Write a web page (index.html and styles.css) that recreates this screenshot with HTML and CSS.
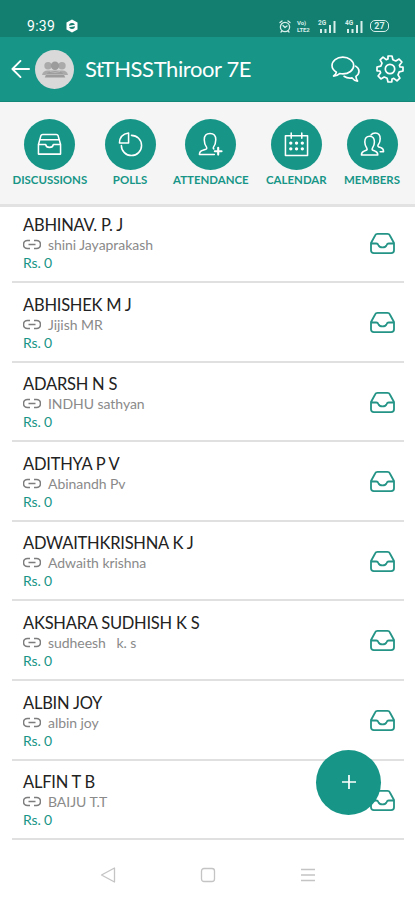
FILE: index.html
```html
<!DOCTYPE html>
<html lang="en">
<head>
<meta charset="utf-8">
<meta name="viewport" content="width=device-width, initial-scale=1">
<title>StTHSSThiroor 7E</title>
<link rel="stylesheet" href="styles.css">
</head>
<body>
<svg class="defs" aria-hidden="true">
  <symbol id="tray" viewBox="0 0 28 24"><path d="M2 11.5 6.3 3.6Q7 2 8.8 2h10.4q1.800 0 2.500 1.600L26 11.500V19q0 3-3 3H5q-3 0-3-3zM2 12h5.500q1.600 0 2.200 1.600 1 2.400 4.300 2.400t4.300-2.400Q18.900 12 20.500 12H26"/></symbol>
  <symbol id="link" viewBox="0 0 18 11"><path d="M7 1.500H4.500a4 4 0 0 0 0 8H7M11 1.500h2.500a4 4 0 0 1 0 8H11M5.500 5.500h7"/></symbol>
</svg>
<div class="status">
  <span class="clock">9:39</span>
  <svg class="hex" viewBox="0 0 14 14"><path fill="#fff" d="M7 .5l5.500 3v7L7 13.500l-5.500-3v-7z"/><circle cx="7" cy="7" r="3" fill="#137c6c"/><path stroke="#fff" stroke-width="1.300" d="M4 7.500l6-1"/></svg>
  <div class="indicators">
    <svg class="alarm line" viewBox="0 0 12 13"><circle cx="6" cy="7" r="4.600"/><path d="M1 2.500 3 1M11 2.500 9 1M4 5.500l2 2 2-1.500M3 11l-1 1M9 11l1 1"/></svg>
    <div class="volte"><span>Vo)</span><span>LTE2</span></div>
    <div class="signal"><span>2G</span><svg viewBox="0 0 18 13"><path d="M3 9v4M7.500 9v4M12 5v8M16.500 1v12"/></svg></div>
    <div class="signal"><span>4G</span><svg viewBox="0 0 18 13"><path d="M3 9v4M7.500 9v4M12 5v8M16.500 1v12"/></svg></div>
    <span class="battery">27</span>
  </div>
</div>
<header class="bar">
  <svg class="back line" viewBox="0 0 20 20"><path d="M19 10H2M10 1.500 1.500 10l8.500 8.500"/></svg>
  <div class="avatar"><svg viewBox="0 0 28 18"><g fill="#aaa"><circle cx="6.500" cy="5" r="4"/><circle cx="21.500" cy="5" r="4"/><path d="M0 15q1-5 6-5h16q5 0 6 5z"/></g><g fill="#9c9c9c"><circle cx="14" cy="5" r="4.500"/><path d="M3 17.500q2-6.500 8-6.500h6q6 0 8 6.500z"/></g><path d="M4 14.300h20M8.500 11.200q5.500 2 11 0" stroke="#c4c4c4" fill="none" stroke-width=".8"/></svg></div>
  <h1>StTHSSThiroor 7E</h1>
  <svg class="chat line" viewBox="0 0 30 28"><path d="M5.600 16.800C2.600 15 1 12.500 1 9.900 1 5 6 1.200 12.200 1.200s11.300 3.800 11.300 8.700-5.100 8.700-11.300 8.700q-1.700 0-3.300-.4Q6 20.800 2.600 20.800q2.600-1.500 3-4zM25.500 10.500c2.200 1.200 3.500 3 3.500 5.400 0 2.200-1.200 4-3.200 5.200q.3 2.800 1.700 4.900-3.800-.4-5.700-3.300-4.800.8-8.300-1.700"/></svg>
  <svg class="gear line" viewBox="-14 -14 28 28"><path d="M-2-13H2L2.900-9.200 5.800-8 9.100-9.900 11.900-7 9.400-3.800 10-2 13-1.800V2L9.200 2.900 8 5.800 9.900 9.100 7 11.900 3.800 9.400 2 10 1.800 13H-2L-2.900 9.200-5.800 8-9.100 9.900-11.900 7-9.400 3.800-10 2-13 1.800V-2L-9.200-2.900-8-5.800-9.900-9.100-7-11.900-3.800-9.400-2-10z"/><circle r="4.700"/></svg>
</header>
<nav class="tabs">
  <a><i><svg class="line" viewBox="0 0 26 24"><path d="M1.500 12 4 3q.4-1.300 2-1.300h14q1.600 0 2 1.300l2.500 9v10h-23zM3.500 7h19M1.500 12H9q.5 3 4 3t4-3h7.500"/></svg></i><span>DISCUSSIONS</span></a>
  <a><i><svg class="line" viewBox="0 0 26 26"><path d="M14 3.500A10.500 10.500 0 1 1 3.500 14M11 1v10.500H1.500Q1.500 2.500 11 1z"/></svg></i><span>POLLS</span></a>
  <a><i><svg class="line" viewBox="0 0 26 26"><path d="M17 23.500H1.500q0-3.500 3.500-4.500l3.200-1q1.300-.5.800-2Q6.500 12.500 6.500 8 6.500 1.500 12.500 1.500t6 6.500q0 4.500-2.500 8-.5 1.200.5 1.700"/><path class="plus" d="M21 16.500v7M17.500 20h7"/></svg></i><span>ATTENDANCE</span></a>
  <a><i><svg class="line" viewBox="0 0 26 26"><path d="M1.500 4h23v20.500h-23zM7.500 1v5.500M18.500 1v5.500"/><path class="dots" d="M7 11.500h.1M13 11.500h.1M19 11.500h.1M7 17.500h.1M13 17.500h.1M19 17.500h.1"/></svg></i><span>CALENDAR</span></a>
  <a><i><svg class="line" viewBox="0 0 26 26"><path d="M1.500 24q0-3.500 3-4.300l2-.7q1.500-.5.500-2.300-2-2.700-2-6.200 0-6 5-6t5 6q0 3.500-2 6.200-1 1.800.5 2.300l2 .7q3 .8 3 4.300zM11.500 3Q12.800 1 16 1q5 0 5 6 0 3.500-2 6.200-1 1.800.5 2.300l2 .7q3 .8 3 4.300H21"/></svg></i><span>MEMBERS</span></a>
</nav>
<main class="list">
  <section class="row"><div><h2>ABHINAV. P. J</h2><p><svg><use href="#link"/></svg>shini Jayaprakash</p><b>Rs. 0</b></div><svg class="tray"><use href="#tray"/></svg></section>
  <section class="row"><div><h2>ABHISHEK M J</h2><p><svg><use href="#link"/></svg>Jijish MR</p><b>Rs. 0</b></div><svg class="tray"><use href="#tray"/></svg></section>
  <section class="row"><div><h2>ADARSH N S</h2><p><svg><use href="#link"/></svg>INDHU sathyan</p><b>Rs. 0</b></div><svg class="tray"><use href="#tray"/></svg></section>
  <section class="row"><div><h2>ADITHYA P V</h2><p><svg><use href="#link"/></svg>Abinandh Pv</p><b>Rs. 0</b></div><svg class="tray"><use href="#tray"/></svg></section>
  <section class="row"><div><h2>ADWAITHKRISHNA K J</h2><p><svg><use href="#link"/></svg>Adwaith krishna</p><b>Rs. 0</b></div><svg class="tray"><use href="#tray"/></svg></section>
  <section class="row"><div><h2>AKSHARA SUDHISH K S</h2><p><svg><use href="#link"/></svg>sudheesh &nbsp; k. s</p><b>Rs. 0</b></div><svg class="tray"><use href="#tray"/></svg></section>
  <section class="row"><div><h2>ALBIN JOY</h2><p><svg><use href="#link"/></svg>albin joy</p><b>Rs. 0</b></div><svg class="tray"><use href="#tray"/></svg></section>
  <section class="row"><div><h2>ALFIN T B</h2><p><svg><use href="#link"/></svg>BAIJU T.T</p><b>Rs. 0</b></div><svg class="tray"><use href="#tray"/></svg></section>
</main>
<button class="fab" aria-label="Add"><svg viewBox="0 0 14 14"><path d="M7 0v14M0 7h14"/></svg></button>
<footer class="sysnav">
  <svg viewBox="0 0 16 16"><path d="M14.500 1v14L1.500 8z"/></svg>
  <svg viewBox="0 0 16 16"><rect x="1.500" y="1.500" width="13" height="13" rx="2.500"/></svg>
  <svg viewBox="0 0 16 16"><path d="M1 2.500h14M1 8h14M1 13.500h14"/></svg>
</footer>
</body>
</html>
```
FILE: styles.css
```css
* { box-sizing: border-box; }
body { margin: 0; width: 415px; height: 900px; overflow: hidden; background: #fff; font-family: Lato, sans-serif; display: flex; flex-direction: column; position: relative; }
h1, h2, p { margin: 0; font-weight: 400; white-space: pre; }
svg { display: block; flex: none; }
.defs { position: absolute; width: 0; height: 0; }
.line { fill: none; stroke: #fff; stroke-linejoin: round; stroke-linecap: round; }

.status { height: 37px; flex: none; background: #137f70; color: #fff; display: flex; align-items: center; padding: 15px 26px 0 27px; }
.clock { font: 14px Roboto, sans-serif; letter-spacing: .3px; width: 38px; }
.hex { width: 14px; height: 14px; }
.indicators { margin-left: auto; display: flex; align-items: center; color: #d8eeea; }
.alarm { width: 12px; height: 13px; stroke: #d8eeea; stroke-width: 1.300; margin-right: 6px; }
.volte { font: bold 6px/7px Roboto, sans-serif; width: 15px; display: flex; flex-direction: column; margin-right: 6px; letter-spacing: -.1px; }
.signal { width: 18px; height: 13px; margin-right: 9px; display: grid; }
.signal span { grid-area: 1 / 1; font: bold 6.500px/6px Roboto, sans-serif; }
.signal svg { grid-area: 1 / 1; width: 18px; height: 13px; stroke: #d8eeea; stroke-width: 2; }
.signal:nth-child(4) { margin-right: 7px; }
.battery { width: 19px; height: 12px; border: 1.500px solid #d8eeea; border-radius: 5px; font: bold 9px/10px Roboto, sans-serif; text-align: center; }

.bar { height: 65px; flex: none; background: #179587; display: flex; align-items: center; padding: 0 11px; border-bottom: 1px solid #138878; }
.back { width: 19px; height: 20px; stroke-width: 2; margin-right: 5px; }
.avatar { width: 39px; height: 39px; border-radius: 50%; background: #d9d9d9; display: grid; place-items: center; }
.avatar svg { width: 26px; height: 17px; }
.bar h1 { font-size: 22px; line-height: 28px; color: #fff; margin-left: 11px; flex: 1; letter-spacing: -.4px; }
.chat { width: 29px; height: 27px; stroke-width: 1.700; margin-right: 16px; }
.gear { width: 28px; height: 28px; stroke-width: 1.700; }

.tabs { height: 105px; flex: none; background: #f5f5f5; border-bottom: 3px solid #e2e2e2; display: flex; justify-content: space-between; padding: 17px 15px 0 12.500px; }
.tabs a { display: flex; flex-direction: column; align-items: center; color: #179587; }
.tabs i { width: 51px; height: 51px; border-radius: 50%; background: #179587; display: grid; place-items: center; }
.tabs svg { width: 25px; height: 25px; stroke-width: 1.600; }
.tabs .dots { stroke-width: 3.400; }
.tabs .plus { stroke-width: 2.200; }
.tabs span { font-size: 11.450px; font-weight: 700; line-height: 14px; margin-top: 3px; }

.list { padding: 0 11px 0 12px; flex: none; margin-top: -3.500px; }
.row { height: 79.600px; border-bottom: 2px solid #e0e0e0; padding: 11.500px 8px 0 11px; display: flex; justify-content: space-between; }
.row h2 { font-size: 16.500px; line-height: 20px; color: #222; letter-spacing: -.23px; }
.row p { font-size: 14px; line-height: 19px; color: #8a8a8a; display: flex; align-items: center; letter-spacing: -.05px; }
.row p svg { width: 18px; height: 11px; margin-right: 7px; fill: none; stroke: #7d7d7d; stroke-width: 1.600; }
.row b { display: block; font-size: 14px; line-height: 17px; font-weight: 400; color: #179587; letter-spacing: -.15px; }
.tray { width: 27px; height: 23px; margin-top: 16.500px; fill: none; stroke: #249486; stroke-width: 1.900; stroke-linejoin: round; }

.fab { position: absolute; left: 316px; top: 750px; width: 65px; height: 65px; border: 0; border-radius: 50%; background: #179587; display: grid; place-items: center; padding: 0 0 2px; }
.fab svg { width: 14px; height: 14px; stroke: #fff; stroke-width: 1.700; }

.sysnav { flex: 1; display: flex; justify-content: center; align-items: center; gap: 84px; padding-top: 10px; }
.sysnav svg { width: 16px; height: 16px; fill: none; stroke: #c4c4c4; stroke-width: 1.300; stroke-linejoin: round; }
```
